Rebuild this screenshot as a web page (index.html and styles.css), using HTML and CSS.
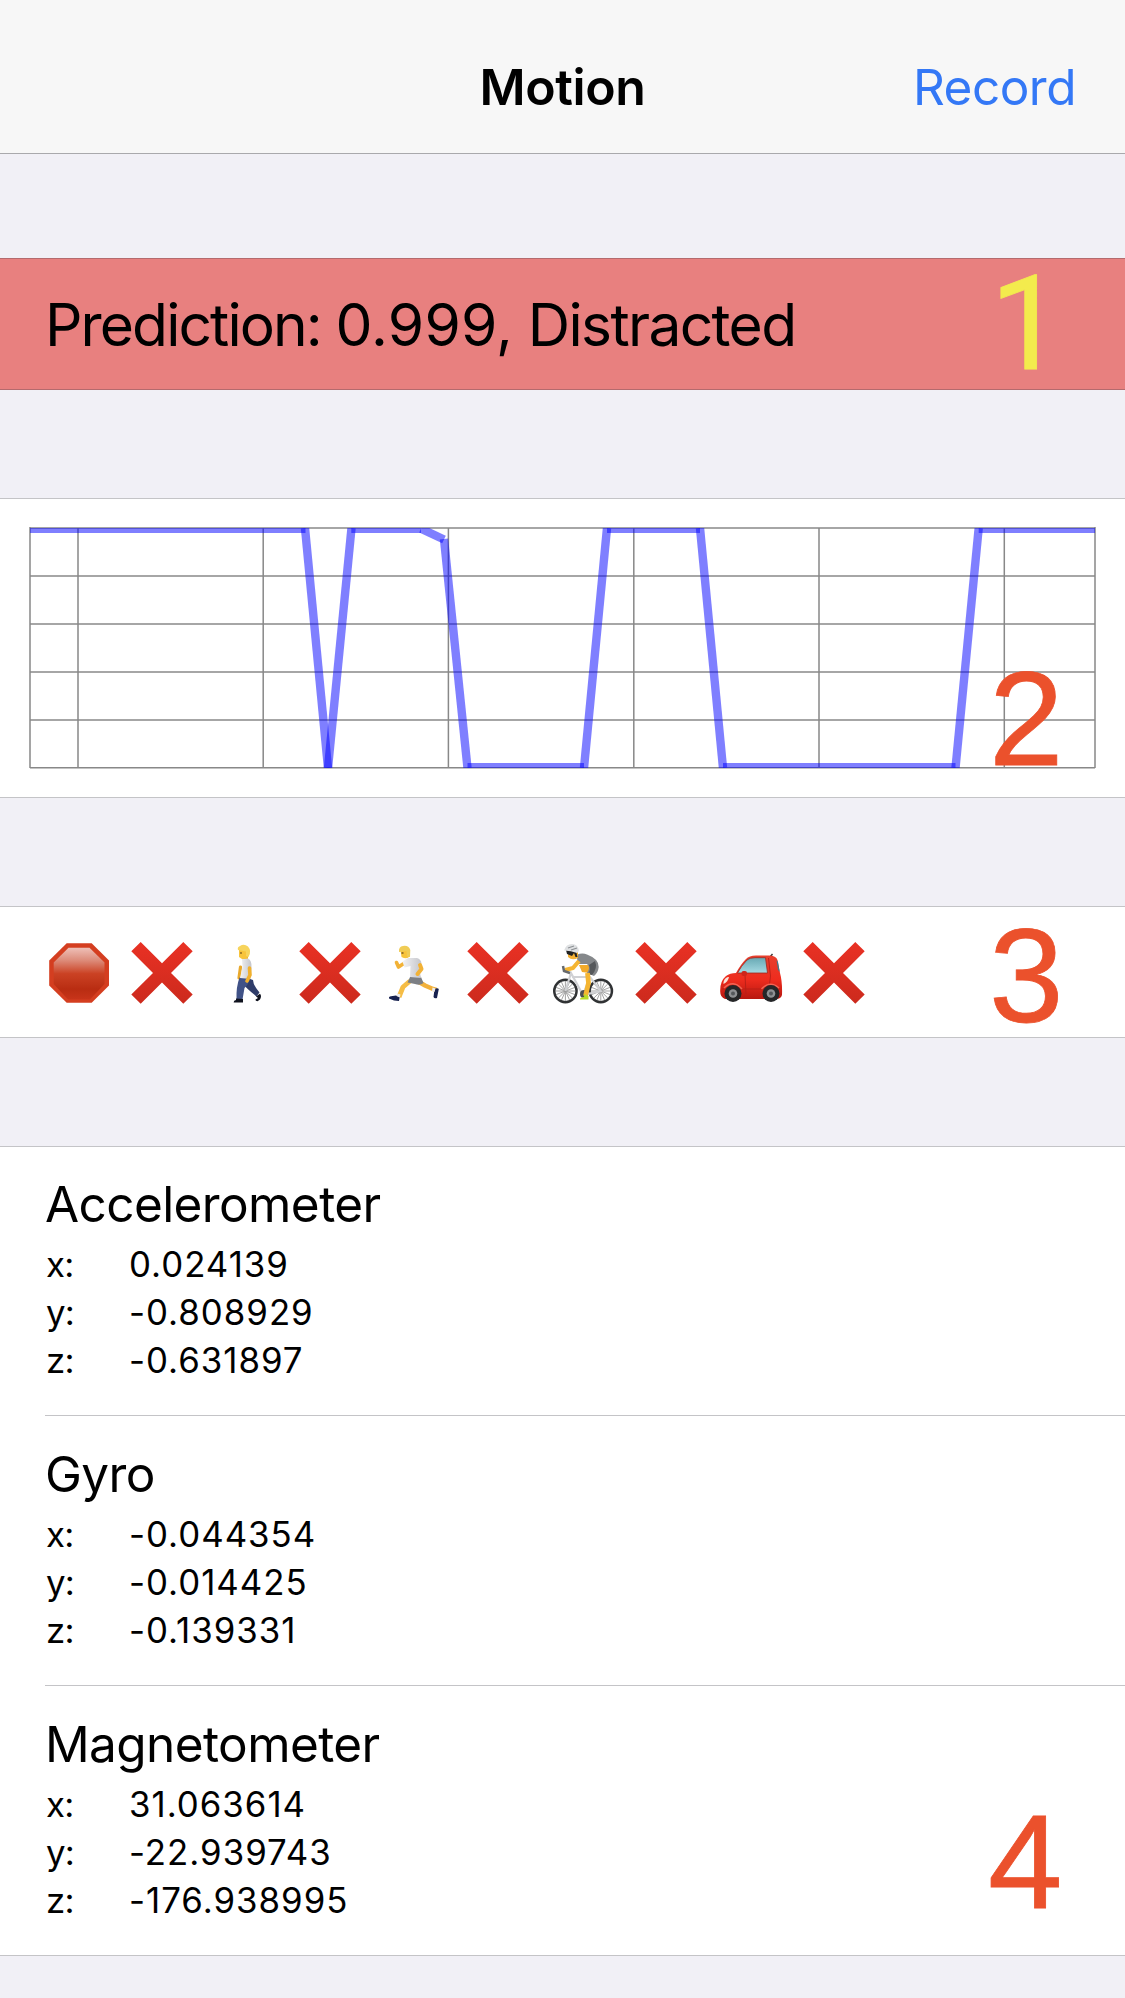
FILE: index.html
```html
<!DOCTYPE html>
<html lang="en">
<head>
<meta charset="utf-8">
<title>Motion</title>
<link rel="stylesheet" href="styles.css">
</head>
<body>
<header class="navbar">
  <span></span>
  <h1 class="navbar-title">Motion</h1>
  <a class="navbar-action">Record</a>
</header>
<main>
  <section class="group prediction">
    <p class="prediction-text">Prediction: <span class="prediction-value">0.999,</span> <span class="prediction-label">Distracted</span></p>
    <span class="callout callout-1">1</span>
  </section>

  <section class="group chart">
    <svg class="chart-plot" viewBox="0 0 1069 244" width="1069" height="244">
      <defs><clipPath id="plot"><rect x="2" y="2" width="1065" height="240"/></clipPath></defs>
      <g class="grid">
        <path class="grid-h" d="M2 2H1067M2 50H1067M2 98H1067M2 146H1067M2 194H1067"/>
        <path class="grid-v" d="M2 1V242M50 2V242M235.2 2V242M420.4 2V242M605.8 2V242M791 2V242M976.3 2V242M1067 1V242"/>
        <path class="grid-v" d="M2 241.8H1067"/>
      </g>
      <g class="series" clip-path="url(#plot)">
        <path d="M2 2.7H277.5"/>
        <path d="M277 2L300 242"/>
        <path d="M300 242L323.5 2"/>
        <path d="M323.3 2.7H393"/>
        <path d="M393 2.7L416 13.5"/>
        <path d="M416 13L439.5 242"/>
        <path d="M439.5 241.2H556"/>
        <path d="M556 242L579 2"/>
        <path d="M579 2.7H672"/>
        <path d="M672 2L695 242"/>
        <path d="M695 241.2H927.5"/>
        <path d="M927.5 242L950.7 2"/>
        <path d="M950.7 2.7H1067"/>
      </g>
    </svg>
    <span class="callout callout-2">2</span>
  </section>

  <section class="group activities">
    <svg class="icon" viewBox="0 0 64 64">
      <defs>
        <linearGradient id="stopFill" x1="0" y1="0" x2="0" y2="1"><stop offset="0" stop-color="#eec0b8"/><stop offset=".25" stop-color="#dc8a78"/><stop offset=".5" stop-color="#cb4224"/><stop offset=".8" stop-color="#b92d12"/><stop offset="1" stop-color="#c8341a"/></linearGradient>
        <linearGradient id="crossFill" x1="0" y1="0" x2="0" y2="1"><stop offset="0" stop-color="#e93124"/><stop offset="1" stop-color="#cc2a1d"/></linearGradient>
        <linearGradient id="shirt" x1="0" y1="0" x2="1" y2="0"><stop offset="0" stop-color="#f3f3f5"/><stop offset="1" stop-color="#c4c5ca"/></linearGradient>
        <linearGradient id="carFill" x1="0" y1="0" x2="0" y2="1"><stop offset="0" stop-color="#e8402e"/><stop offset=".55" stop-color="#ee2c1e"/><stop offset="1" stop-color="#b81810"/></linearGradient>
        <linearGradient id="glass" x1="0" y1="0" x2="0" y2="1"><stop offset="0" stop-color="#68a9b4"/><stop offset="1" stop-color="#a6d9e2"/></linearGradient>
        <symbol id="cross" viewBox="0 0 64 64"><path fill="url(#crossFill)" d="M9.7 0L31 21.3L52.3 0L61.7 9.3L40 31L61.7 52.4L52.3 61.8L31 40.4L9.7 61.8L.3 52.4L22 31L.3 9.3Z"/></symbol>
      </defs>
      <path fill="#d43e20" d="M19.7 1.3H44.7L62 18.5V43.5L44.7 60.7H19.7L2.2 43.5V18.5Z"/>
      <path fill="url(#stopFill)" d="M21.5 5.7H42.5L57.5 20.5V42L43 57.5H21L6.7 42V20.5Z"/>
    </svg>
    <svg class="icon" viewBox="0 0 64 64"><use href="#cross"/></svg>
    <svg class="icon" viewBox="0 0 64 64">
      <path d="M25.5 25L24 36" stroke="#e9a92c" stroke-width="3.2" stroke-linecap="round"/>
      <path fill="#2f3c69" d="M29 35L38 38Q38 43 44.5 50.5L41.5 54.5Q31 46 29 43Z"/>
      <path fill="#405287" d="M24.500 35.500L35 36Q34 42 29.500 46L27.500 57.500H21.500Q21 45 24.500 35.500Z"/>
      <path fill="#10131f" d="M21 56.500L28 57V60.500H18.700Q18.500 58.500 21 58ZM41 54.500L45 51.700Q47 54 45 57.500L42.500 59.200Q40 59 40.600 57.500L43 56Z"/>
      <path fill="#f4b42e" d="M27 14H33V18H27Z"/>
      <path fill="url(#shirt)" d="M27 17L33 16.500Q37 18 36.500 26L35.500 37L25 36L27.500 25Z"/>
      <path d="M34.500 26L35 33L32 39" fill="none" stroke="#f0b02e" stroke-width="3.600" stroke-linecap="round" stroke-linejoin="round"/>
      <path fill="#f8c43c" d="M24 8H34V13Q32 17.500 27 17L24 15Z"/>
      <path fill="#f7d45c" d="M23 8Q22 5 25 4Q29 1.500 33 4.500Q37 9 33.500 15L31 14V9.500Z"/>
      <path d="M25 11H27" stroke="#5a3d17" stroke-width="1.200"/>
    </svg>
    <svg class="icon" viewBox="0 0 64 64"><use href="#cross"/></svg>
    <svg class="icon" viewBox="0 0 64 64">
      <path d="M36 40L42 43.500L50 47L53.500 48" fill="none" stroke="#f2b13b" stroke-width="4.500"/>
      <path d="M27 39L20 45L16 55" fill="none" stroke="#f6bd45" stroke-width="4.800" stroke-linejoin="round"/>
      <path fill="#17214f" d="M13 53.500L16.700 55L16 59Q11 59 6 56.500Q5.500 54.500 8 54.300ZM51.500 47Q54.500 45.300 55.800 47L54 56Q51.500 57 50.500 55Z"/>
      <path fill="#ececef" d="M14.500 51.500L17.500 52.500L16.700 55.500L13.500 54ZM49.500 45.500L52.500 46.500L51.500 50L49 49Z"/>
      <path fill="#7c7f84" d="M27.500 34L38 35L40.500 41Q37 44 32 42L24.500 40.500Z"/>
      <path d="M20 22L15.500 25L13.500 20.500" fill="none" stroke="#f2b236" stroke-width="3.600" stroke-linejoin="round" stroke-linecap="round"/>
      <path fill="url(#shirt)" d="M19.500 19.500L25 16H34Q38 17 38.500 21.500L35.500 23L38 36L27 35L27.500 24L21.500 25.500Z"/>
      <path d="M37 23L38.500 27L34.500 32" fill="none" stroke="#f2b236" stroke-width="4" stroke-linejoin="round" stroke-linecap="round"/>
      <path fill="#f8c43c" d="M17.500 8H27V14Q24 18 18.500 15Z"/>
      <path fill="#f0cc55" d="M16 10Q15.500 4.500 20 4Q25.500 3 27.300 8L27 15L24 14.500L23.500 9Z"/>
      <path d="M18.500 11H20.500" stroke="#5a3d17" stroke-width="1.200"/>
    </svg>
    <svg class="icon" viewBox="0 0 64 64"><use href="#cross"/></svg>
    <svg class="icon" viewBox="0 0 64 64">
      <g fill="none" stroke="#999" stroke-width=".9">
        <path d="M14.400 38V60M3.500 49H25.500M6.500 41L22.300 57M22.300 41L6.500 57M10 39L19 59M19 39L10 59M4 45L25 53M25 45L4 53"/>
        <path d="M49.800 38V60M39 49H61M42 41L57.700 57M57.700 41L42 57M45.500 39L54 59M54 39L45.500 59M39.500 45L60 53M60 45L39.500 53"/>
      </g>
      <g fill="none" stroke="#303234" stroke-width="2.400"><circle cx="14.400" cy="49" r="11.200"/><circle cx="49.800" cy="49" r="11.200"/></g>
      <path d="M14.400 49L20 31L32 53L49.800 49L39 35H21M32 53L39 35" fill="none" stroke="#d0d1d4" stroke-width="2.200"/>
      <circle cx="33" cy="52" r="4" fill="#4d5053"/>
      <path fill="#f2aa2a" d="M28 23H38V31L31 30Z"/>
      <path fill="#85888b" d="M25.500 13Q31 10.500 36 12.500Q48 17 47.700 25Q47 31 43 34L36 31Q40 25 36 22H27Z"/>
      <path fill="#55585b" d="M38 23L44 19Q47 26 41 33L37 32Q40 28 38 23Z"/>
      <path d="M36.500 31L37.500 41L34.500 54" fill="none" stroke="#f5b531" stroke-width="4.800" stroke-linejoin="round"/>
      <path d="M28 19L22 26L14 28" fill="none" stroke="#f5b531" stroke-width="4.200" stroke-linejoin="round"/>
      <path d="M12 24L13 29L19 31" fill="none" stroke="#66696c" stroke-width="2.500"/>
      <path fill="#b8dc28" d="M33.500 52L37.500 54V57.500H29Q28.500 55.500 33 55Z"/>
      <path fill="#f3b135" d="M17 9H27V16Q21 19 17 15Z"/>
      <path fill="#202224" d="M15 8L25 9L26.500 15L24.500 15L23 11L21 14L16 12Z"/>
      <path fill="#dfe1e3" d="M13.300 8Q15 2 21 2Q27 2 28 9L26 11Q20 8.500 13.300 8.500Z"/>
      <path d="M17 6L23 4M20 8L26 6" stroke="#8d9194" stroke-width="1.200"/>
    </svg>
    <svg class="icon" viewBox="0 0 64 64"><use href="#cross"/></svg>
    <svg class="icon" viewBox="0 0 64 64">
      <path d="M51 15L53.500 12" stroke="#333" stroke-width="1.400"/>
      <path fill="url(#carFill)" d="M17 31Q22 22 27 17Q30 13.500 37 13.500H50Q57 13.500 58.500 18L61 31Q63.500 40 63 53Q62 57 57 57H6Q1 55 1.200 49Q1 39 7 34Q11 31 17 31Z"/>
      <path fill="url(#glass)" stroke="#9b281f" stroke-width=".8" d="M18.500 31Q22 24 28 18Q30.500 15.700 36 15.700H46.500L48.500 31Z"/>
      <path fill="#397e91" d="M57.500 18L59 20L60.700 30L59 28Z"/>
      <path d="M49.500 16L51.500 34L50 47M26 33L27 52M3 47H61" fill="none" stroke="#b51f17" stroke-width=".9"/>
      <path fill="#f9e3da" d="M4.500 40Q6 35 10 35Q9 40 4.500 42Z"/>
      <rect x="22.500" y="29" width="5.500" height="5" rx="2" fill="#cf241a"/>
      <path d="M5 46Q14 37 23 47M42.500 47Q51 38 60 46" fill="none" stroke="#f16454" stroke-width="1.500"/>
      <circle cx="14" cy="51.500" r="8.500" fill="#252628"/><circle cx="52" cy="51.500" r="8.500" fill="#252628"/>
      <circle cx="14" cy="51.500" r="4.300" fill="#8e9093"/><circle cx="52" cy="51.500" r="4.300" fill="#8e9093"/>
      <circle cx="14" cy="51.500" r="2" fill="#54575b"/><circle cx="52" cy="51.500" r="2" fill="#54575b"/>
    </svg>
    <svg class="icon" viewBox="0 0 64 64"><use href="#cross"/></svg>
    <span class="callout callout-3">3</span>
  </section>

  <section class="group sensors">
    <article class="sensor">
      <h2 class="sensor-name">Accelerometer</h2>
      <dl class="axes"><dt>x:</dt><dd>0.024139</dd><dt>y:</dt><dd>-0.808929</dd><dt>z:</dt><dd>-0.631897</dd></dl>
    </article>
    <article class="sensor">
      <h2 class="sensor-name">Gyro</h2>
      <dl class="axes"><dt>x:</dt><dd>-0.044354</dd><dt>y:</dt><dd>-0.014425</dd><dt>z:</dt><dd>-0.139331</dd></dl>
    </article>
    <article class="sensor">
      <h2 class="sensor-name">Magnetometer</h2>
      <dl class="axes"><dt>x:</dt><dd>31.063614</dd><dt>y:</dt><dd>-22.939743</dd><dt>z:</dt><dd>-176.938995</dd></dl>
    </article>
    <span class="callout callout-4">4</span>
  </section>
</main>
</body>
</html>
```
FILE: styles.css
```css
* { box-sizing: border-box; margin: 0; padding: 0; }

body {
  min-height: 1998px;
  background: #f1f0f6;
  color: #000;
  font-family: Inter, "Liberation Sans", sans-serif;
}

.navbar {
  display: grid;
  grid-template-columns: 1fr auto 1fr;
  height: 154px;
  padding: 57px 49px 0;
  background: #f7f7f7;
  border-bottom: 1px solid #a9a9ac;
  font-size: 49.5px;
  line-height: 60px;
}
.navbar-title { font-size: 50px; font-weight: 600; letter-spacing: -0.4px; }
.navbar-action { justify-self: end; color: #3478f6; letter-spacing: -0.5px; }

.group {
  position: relative;
  background: #fff;
  border-top: 1px solid #c4c4c7;
  border-bottom: 1px solid #c4c4c7;
}

.prediction {
  height: 132px;
  margin-top: 104px;
  padding-left: 45px;
  background: #e8807f;
  border-color: #b46a6d;
}
.prediction-text { font-size: 58.7px; line-height: 131px; letter-spacing: -1.9px; }
.prediction-value { letter-spacing: 0.2px; }
.prediction-label { letter-spacing: -1.65px; }

.chart { height: 300px; margin-top: 108px; padding: 27px 28px; }
.chart-plot { display: block; }
.grid path { fill: none; stroke: #808080; }
.grid .grid-h { stroke: #a6a6a6; stroke-width: 2; }
.grid .grid-v { stroke: #888; stroke-width: 1.5; }
.series path { fill: none; stroke: #00f; stroke-opacity: .5; stroke-width: 8.4; }

.activities {
  display: flex;
  gap: 20px;
  height: 132px;
  margin-top: 108px;
  padding: 35px 47px;
}
.icon { flex: none; width: 64px; height: 64px; }

.sensors { margin-top: 108px; padding-left: 45px; }
.sensor { height: 268px; padding-top: 27px; }
.sensor + .sensor { height: 270px; padding-top: 28px; border-top: 1px solid #c4c4c7; }
.sensor-name { font-size: 49.5px; font-weight: 400; line-height: 60px; letter-spacing: -0.6px; }
.axes {
  display: grid;
  grid-template-columns: 83px 1fr;
  margin-top: 6px;
  padding-left: 1px;
  font-size: 34.8px;
  line-height: 48px;
}
.axes dt { letter-spacing: -0.8px; }
.axes dd { letter-spacing: 1px; }

/* Numbered markers laid over the right edge of each group */
.callout {
  position: absolute;
  color: #eb512c;
  font: 134px/134px "Liberation Sans", sans-serif;
  -webkit-text-stroke: 0.8px currentColor;
}
.callout-1 { left: 990px; top: -2px; color: #f3eb4d; font-family: Roboto, sans-serif; font-size: 131px; }
.callout-2 { left: 989px; top: 153px; }
.callout-3 { left: 989px; top: 2px; }
.callout-4 { left: 988px; top: 648px; }
```
